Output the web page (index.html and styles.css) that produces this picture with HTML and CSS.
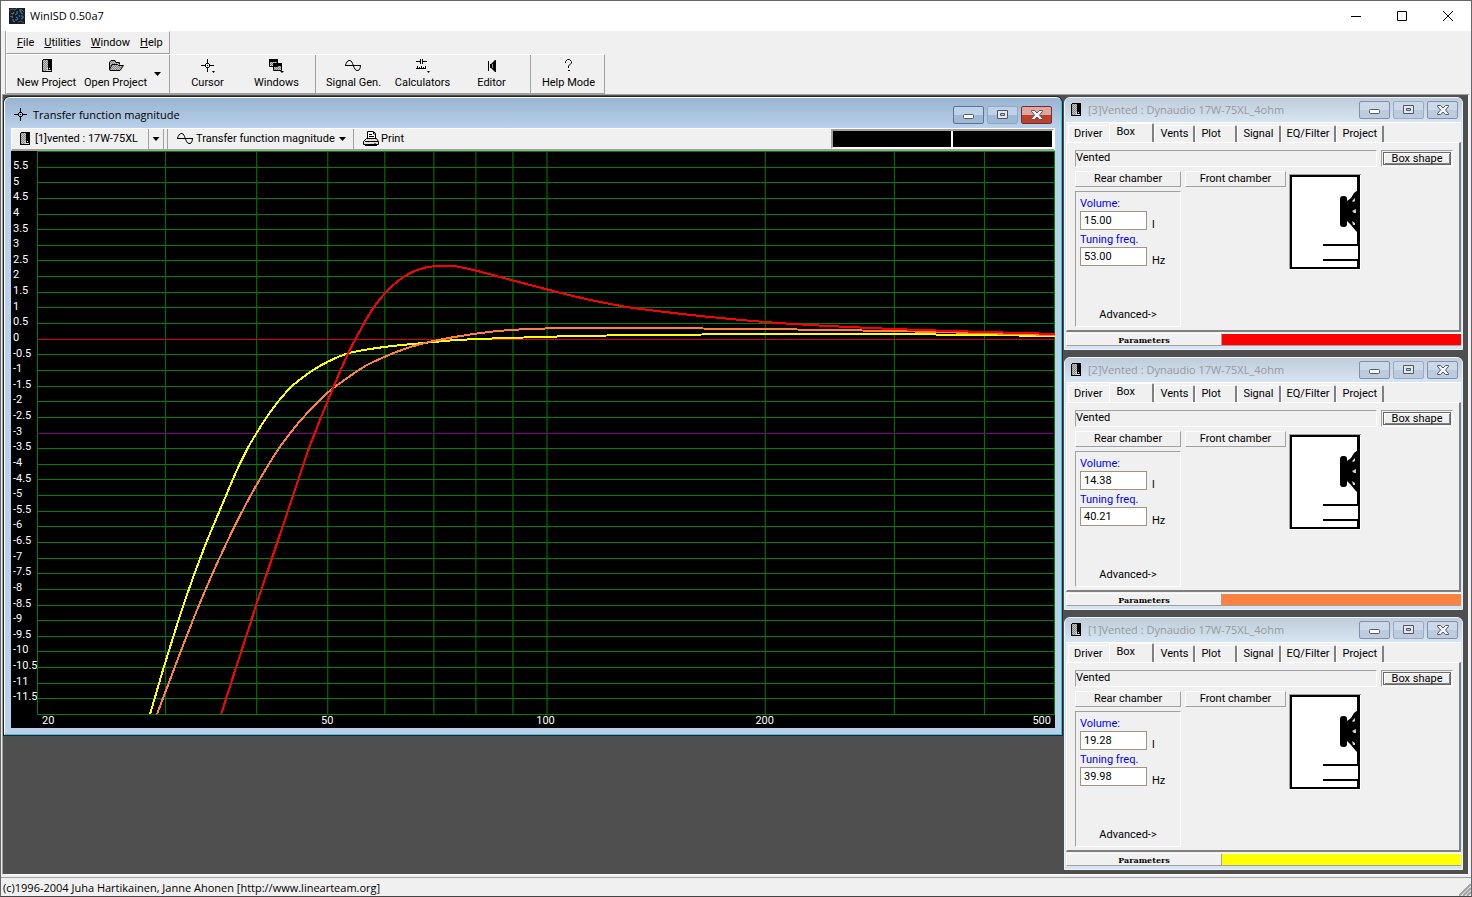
FILE: index.html
```html
<!DOCTYPE html>
<html lang="en">
<head>
<meta charset="utf-8">
<title>WinISD 0.50a7</title>
<link rel="stylesheet" href="styles.css">
</head>
<body>
<svg class="defs" aria-hidden="true">
  <defs>
    <pattern id="dither" width="2" height="2" patternUnits="userSpaceOnUse"><rect width="2" height="2" fill="#c4c4c4"/><path d="M0 0h1v1h-1zM1 1h1v1h-1z" fill="#858585"/></pattern>
    <symbol id="i-box" viewBox="0 0 10 14"><path d="M1 0h9v13H0V1h1z" fill="#000"/><path d="M1 1h5v11H1z" fill="url(#dither)"/><path d="M5 9h1v1H5zM7 9h1v1H7zM5 11h4v1H5z" fill="#ddd"/></symbol>
    <symbol id="i-min" viewBox="0 0 12 10"><rect x=".5" y="4.500" width="10" height="4" rx="1" fill="#fff" stroke="#50566b"/></symbol>
    <symbol id="i-max" viewBox="0 0 12 10"><path d="M.5.5h10v8H.5z" fill="#e6e6e6" stroke="#50566b"/><path d="M3.500 3.500h4v2h-4z" fill="#b8c9dc" stroke="#50566b"/></symbol>
    <symbol id="i-close" viewBox="0 0 12 10"><path d="M.5.5h3l2.500 2.500L8.500.5h3v1L8.500 5l3 3.500v1h-3L6 7 3.500 9.500h-3v-1L3.500 5l-3-3.500z" fill="#f4f4f4" stroke="#50566b"/></symbol>
    <symbol id="i-cross" viewBox="0 0 14 14"><path d="M6 0h1v4H6zM6 9h1v4H6zM0 6h4v1H0zM9 6h4v1H9zM5 4h3v1H5zM5 8h3v1H5zM4 5h1v3H4zM8 5h1v3H8zM6 6h1v1H6z" fill="#000"/></symbol>
    <symbol id="i-wave" viewBox="0 0 17 12"><path d="M0 5.500h16M.5 5.500C1 3 2.500.500 4 .500h1c3 0 3.500 10 7 10h1c1.500 0 2.500-3 2.500-5" fill="none" stroke="#000"/></symbol>
    <symbol id="i-cabinet" viewBox="0 0 72 96"><path d="M0 0h72v96H0z" fill="#fff"/><path d="M0 0h72v1H1v94H0z" fill="#a0a0a0"/><path d="M1 1h70v94H1zM3 3v90h65V3z" fill="#000" fill-rule="evenodd"/><path d="M69 16l-4 3-3 5-4 3v-2q0-3-3-3h-1q-3 0-3 3v25q0 3 3 3h1q3 0 3-3v-3l4 4 4 5 3 3z" fill="#000"/><path d="M63 27l3-3v3l-2 1zM63 37l4-2v4h-2zM63 47l3 2v2h-2z" fill="#d0d0d0"/><path d="M34 70h36v2H34zM34 85h36v2H34z" fill="#000"/><path d="M68 72h1v13h-1z" fill="#fff"/></symbol>
  </defs>
</svg>
<div class="app">
  <header class="caption">
    <svg class="logo" width="16" height="16" viewBox="0 0 16 16"><path d="M0 0h16v16H0z" fill="#181b20"/><path d="M0 3l3-2 3 1 2-2M9 14l3-1 3 2M12 1l3 3M1 8l3 2" stroke="#55585c" fill="none"/><path d="M2 5l2 1 1-2M2 9l2-1M3 12h2M6 7l3-2M7 4h2M10 2h2l-1 2h2M12 5l2 1M12 8h2v2l-2 1M7 9l2 1-1 2H6M4 13l2 1M10 7l1 2" stroke="#3585c6" fill="none"/></svg>
    <h1 class="caption-title">WinISD 0.50a7</h1>
    <div class="sysbuttons">
      <button class="sysbtn" aria-label="Minimize"><svg width="10" height="10"><path d="M0 5h10v1H0z"/></svg></button>
      <button class="sysbtn" aria-label="Maximize"><svg width="10" height="10"><path d="M.5.5h9v9h-9z" fill="none" stroke="#000"/></svg></button>
      <button class="sysbtn" aria-label="Close"><svg width="10" height="10"><path d="M0 0l10 10M10 0L0 10" stroke="#000"/></svg></button>
    </div>
  </header>
  <nav class="menubar">
    <button class="menu"><u>F</u>ile</button><button class="menu"><u>U</u>tilities</button><button class="menu"><u>W</u>indow</button><button class="menu"><u>H</u>elp</button>
  </nav>
  <div class="toolbar">
    <button class="tool"><svg width="10" height="14"><use href="#i-box"/></svg>New Project</button>
    <button class="tool"><svg width="16" height="14"><path d="M1.500 11V3.500L3 1.500h4l1 2h3.500v2M1.500 10.500L4 5.500h5.500l1 1h5L12 11.500H2z" fill="url(#dither)" stroke="#000"/></svg>Open Project</button>
    <button class="drop" aria-label="Open recent"><i class="arrow"></i></button>
    <button class="tool sep"><svg width="14" height="14"><use href="#i-cross"/><path d="M11 12h3l-1.500 2z"/></svg>Cursor</button>
    <button class="tool"><svg width="15" height="14"><path d="M.5.5h8v7h-8zM4.500 4.500h8v7h-8z" fill="url(#dither)" stroke="#000"/><path d="M0 0h9v3H0zM4 4h9v3H4zM11 12h4l-2 2z"/></svg>Windows</button>
    <button class="tool sep"><svg width="17" height="14"><use href="#i-wave" y="1" width="17" height="12"/></svg>Signal Gen.</button>
    <button class="tool"><svg width="14" height="14"><path d="M0 2.500h4M7 2.500h4M4.500 0v5M6.500 0v5M0 9.500h10M1.500 7v2M3.500 8v2M5.500 7v2M7.500 8v2M9.500 7v2" stroke="#000"/><path d="M11 12h3l-1.500 2z"/></svg>Calculators</button>
    <button class="tool"><svg width="12" height="14"><path d="M2 2h1v10H2zM9 1h1v12H9zM4 5h1v4H4zM5 5l4-4v12L5 9z"/><path d="M6.500 5v4" stroke="#999"/></svg>Editor</button>
    <button class="tool sep"><svg width="10" height="14"><path d="M1.500 4V2.500l2-2h2l2 2V4l-3 3v2M4 11.500h2" fill="none" stroke="#000"/></svg>Help Mode</button>
  </div>

  <main class="workspace">
    <section class="win active">
      <header class="title">
        <svg width="14" height="14"><use href="#i-cross"/></svg>
        <h2>Transfer function magnitude</h2>
        <button class="wbtn" aria-label="Minimize"><svg width="12" height="10"><use href="#i-min"/></svg></button>
        <button class="wbtn dim" aria-label="Maximize"><svg width="12" height="10"><use href="#i-max"/></svg></button>
        <button class="wbtn red" aria-label="Close"><svg width="12" height="10"><use href="#i-close"/></svg></button>
      </header>
      <div class="plotbar">
        <button class="flat project"><svg width="10" height="14"><use href="#i-box"/></svg>[1]vented : 17W-75XL</button>
        <button class="flat pick" aria-label="Choose project"><i class="arrow"></i></button>
        <button class="flat quantity"><svg width="17" height="12"><use href="#i-wave"/></svg>Transfer function magnitude<i class="arrow"></i></button>
        <button class="flat print"><svg width="17" height="16"><path d="M4.500 8V.5h6l2 2V8" fill="#fff" stroke="#000"/><path d="M6 3.500h3M6 5.500h5M10.500 1v2h2" stroke="#000" fill="none"/><path d="M.5 10.500l3-3h10l2 3v3H.5z" fill="#ddd" stroke="#000"/><path d="M2 10.500h13M2 14.500h12" stroke="#000"/><path d="M11 12h2v1h-2z" fill="#d33"/></svg>Print</button>
        <div class="readout"><output></output><output></output></div>
      </div>
      <div class="chart">
        <div class="yaxis" id="yaxis"></div>
        <svg class="plot" id="plot" viewBox="0 0 1017 563" preserveAspectRatio="none" role="img" aria-label="Transfer function magnitude"></svg>
        <div class="xaxis"><span>20</span><span>50</span><span>100</span><span>200</span><span>500</span></div>
      </div>
    </section>

    <div class="projects">
      <section class="win">
        <header class="title">
          <svg width="10" height="14"><use href="#i-box"/></svg><h2>[3]Vented : Dynaudio 17W-75XL_4ohm</h2>
          <button class="wbtn" aria-label="Minimize"><svg width="12" height="10"><use href="#i-min"/></svg></button>
          <button class="wbtn dim" aria-label="Maximize"><svg width="12" height="10"><use href="#i-max"/></svg></button>
          <button class="wbtn" aria-label="Close"><svg width="12" height="10"><use href="#i-close"/></svg></button>
        </header>
        <div class="client">
          <div class="tabs" role="tablist"><button role="tab" class="tab">Driver</button><button role="tab" class="tab on" aria-selected="true">Box</button><button role="tab" class="tab">Vents</button><button role="tab" class="tab wide">Plot</button><button role="tab" class="tab">Signal</button><button role="tab" class="tab">EQ/Filter</button><button role="tab" class="tab">Project</button></div>
          <div class="page">
            <div class="kind"><span class="kind-name">Vented</span><span class="frame"><button class="shape">Box shape</button></span></div>
            <div class="box">
              <div class="rear">
                <button class="chamber">Rear chamber</button>
                <div class="group">
                  <label for="v3">Volume:</label><div class="field"><input id="v3" value="15.00"><span>l</span></div>
                  <label for="f3">Tuning freq.</label><div class="field"><input id="f3" value="53.00"><span>Hz</span></div>
                  <button class="advanced">Advanced-&gt;</button>
                </div>
              </div>
              <button class="chamber front">Front chamber</button>
              <svg class="cabinet" width="72" height="96"><use href="#i-cabinet"/></svg>
            </div>
          </div>
          <footer class="foot"><button class="params">Parameters</button><span class="swatch red"></span></footer>
        </div>
      </section>
      <section class="win">
        <header class="title">
          <svg width="10" height="14"><use href="#i-box"/></svg><h2>[2]Vented : Dynaudio 17W-75XL_4ohm</h2>
          <button class="wbtn" aria-label="Minimize"><svg width="12" height="10"><use href="#i-min"/></svg></button>
          <button class="wbtn dim" aria-label="Maximize"><svg width="12" height="10"><use href="#i-max"/></svg></button>
          <button class="wbtn" aria-label="Close"><svg width="12" height="10"><use href="#i-close"/></svg></button>
        </header>
        <div class="client">
          <div class="tabs" role="tablist"><button role="tab" class="tab">Driver</button><button role="tab" class="tab on" aria-selected="true">Box</button><button role="tab" class="tab">Vents</button><button role="tab" class="tab wide">Plot</button><button role="tab" class="tab">Signal</button><button role="tab" class="tab">EQ/Filter</button><button role="tab" class="tab">Project</button></div>
          <div class="page">
            <div class="kind"><span class="kind-name">Vented</span><span class="frame"><button class="shape">Box shape</button></span></div>
            <div class="box">
              <div class="rear">
                <button class="chamber">Rear chamber</button>
                <div class="group">
                  <label for="v2">Volume:</label><div class="field"><input id="v2" value="14.38"><span>l</span></div>
                  <label for="f2">Tuning freq.</label><div class="field"><input id="f2" value="40.21"><span>Hz</span></div>
                  <button class="advanced">Advanced-&gt;</button>
                </div>
              </div>
              <button class="chamber front">Front chamber</button>
              <svg class="cabinet" width="72" height="96"><use href="#i-cabinet"/></svg>
            </div>
          </div>
          <footer class="foot"><button class="params">Parameters</button><span class="swatch orange"></span></footer>
        </div>
      </section>
      <section class="win">
        <header class="title">
          <svg width="10" height="14"><use href="#i-box"/></svg><h2>[1]Vented : Dynaudio 17W-75XL_4ohm</h2>
          <button class="wbtn" aria-label="Minimize"><svg width="12" height="10"><use href="#i-min"/></svg></button>
          <button class="wbtn dim" aria-label="Maximize"><svg width="12" height="10"><use href="#i-max"/></svg></button>
          <button class="wbtn" aria-label="Close"><svg width="12" height="10"><use href="#i-close"/></svg></button>
        </header>
        <div class="client">
          <div class="tabs" role="tablist"><button role="tab" class="tab">Driver</button><button role="tab" class="tab on" aria-selected="true">Box</button><button role="tab" class="tab">Vents</button><button role="tab" class="tab wide">Plot</button><button role="tab" class="tab">Signal</button><button role="tab" class="tab">EQ/Filter</button><button role="tab" class="tab">Project</button></div>
          <div class="page">
            <div class="kind"><span class="kind-name">Vented</span><span class="frame"><button class="shape">Box shape</button></span></div>
            <div class="box">
              <div class="rear">
                <button class="chamber">Rear chamber</button>
                <div class="group">
                  <label for="v1">Volume:</label><div class="field"><input id="v1" value="19.28"><span>l</span></div>
                  <label for="f1">Tuning freq.</label><div class="field"><input id="f1" value="39.98"><span>Hz</span></div>
                  <button class="advanced">Advanced-&gt;</button>
                </div>
              </div>
              <button class="chamber front">Front chamber</button>
              <svg class="cabinet" width="72" height="96"><use href="#i-cabinet"/></svg>
            </div>
          </div>
          <footer class="foot"><button class="params">Parameters</button><span class="swatch yellow"></span></footer>
        </div>
      </section>
    </div>
  </main>
  <footer class="status"><span>(c)1996-2004 Juha Hartikainen, Janne Ahonen [http://www.linearteam.org]</span><svg width="12" height="12"><path d="M0 12L12 0M4 12l8-8M8 12l4-4" stroke="#a0a0a0" stroke-width="2"/></svg></footer>
</div>
<script src="plot.js"></script>
</body>
</html>
```
FILE: styles.css
```css
* { box-sizing: border-box; }
body { margin: 0; font: 11px/14px Roboto, "Liberation Sans", Arial, sans-serif; color: #000; background: #f0f0f0; }
button { font: inherit; color: inherit; background: none; border: 0; padding: 0; margin: 0; border-radius: 0; white-space: nowrap; }
h1, h2 { margin: 0; font-weight: 400; }
svg { display: block; flex: none; }
.defs { position: absolute; width: 0; height: 0; }

.app { min-height: 100vh; display: flex; flex-direction: column; border: 1px solid #67646c; border-bottom-color: #444; background: #f0f0f0; }

.caption { display: flex; align-items: center; height: 30px; padding-left: 8px; background: #fff; }
.caption-title { flex: 1; padding-left: 5px; font: 11px/16px "Open Sans", sans-serif; }
.sysbuttons { display: flex; }
.sysbtn { width: 46px; height: 29px; display: grid; place-items: center; }

.menubar, .toolbar { align-self: flex-start; display: flex; margin-left: 5px; border: 1px solid #fff; border-right-color: #a0a0a0; border-bottom-color: #a0a0a0; box-shadow: -1px 0 #a0a0a0; }
.menubar { height: 23px; padding: 0 1px 0 5px; }
.menu { padding: 0 5px; }
.toolbar { height: 40px; padding: 0 1px 0 5px; align-items: stretch; }
.tool { width: 69px; padding-top: 4px; display: flex; flex-direction: column; align-items: center; gap: 3px; }
.drop { width: 15px; display: grid; place-items: center; }
.sep { width: 73px; margin-left: 4px; padding-left: 3px; border-left: 1px solid #a0a0a0; }
.arrow { width: 7px; height: 4px; background: #000; clip-path: polygon(0 0, 100% 0, 50% 100%); }

.workspace { flex: 1; display: grid; grid-template-columns: minmax(0, 1fr) 399px; gap: 2px; align-items: start; margin: 0 1px 0 1px; padding: 2px 5px 4px 1px; background: #4f4f4f; border: 1px solid #a0a0a0; border-right: 2px solid #f4f4f4; border-bottom-color: #fff; }

.win { background: #d7e4f2; border: 1px solid #eef3f8; border-radius: 6px 6px 0 0; padding: 0 1px 3px; }
.title { display: flex; align-items: center; height: 24px; gap: 3px; padding: 0 4px 0 6px; margin: 0 -1px; border-radius: 5px 5px 0 0; background: linear-gradient(#bfcddb, #d7e4f2); }
.title h2 { flex: 1; padding-left: 4px; font: 11px/16px "Open Sans", sans-serif; color: #999; white-space: nowrap; }
.wbtn { width: 31px; height: 18px; display: grid; place-items: center; border: 1px solid #8290ae; border-radius: 2px; background: linear-gradient(#cbd8e7 50%, #bccbdd 50%); }
.wbtn.dim { border-color: #9baac5; }

.active { background: #b9d1ea; border-color: #fff #34c5e0 #34c5e0 #fff; box-shadow: 0 0 0 1px #222; padding: 0 6px 6px; }
.active .title { height: 30px; margin: 0 -6px; padding: 4px 9px 0 9px; background: linear-gradient(#99b4d1, #b9d1ea); }
.active .title h2 { color: #000; padding-left: 2px; }
.active .wbtn { border-color: #5b7390; background: linear-gradient(#bdd2e8 50%, #9fb9d5 50%); }
.active .dim { border-color: #8ea9c6; }
.active .red { border-color: #6b2f3c; background: linear-gradient(#e0a59b 50%, #bd4029 50%); }

.plotbar { display: flex; height: 23px; background: #f0f0f0; border: 1px solid #fff; border-bottom: 2px solid #a0a0a0; }
.flat { display: flex; align-items: center; }
.project { padding-left: 8px; gap: 5px; width: 137px; border-right: 1px solid #a0a0a0; }
.pick { width: 15px; justify-content: center; border-right: 1px solid #a0a0a0; }
.quantity { margin-left: 3px; border-left: 1px solid #a0a0a0; padding-left: 9px; gap: 2px; width: 186px; }
.quantity .arrow { margin-left: auto; margin-right: 7px; }
.print { border-left: 1px solid #a0a0a0; padding-left: 9px; gap: 1px; }
.readout { margin-left: auto; display: grid; grid-template-columns: 118px 1fr; gap: 2px; width: 223px; border: 2px solid #a0a0a0; border-right-color: #fff; border-bottom-color: #fff; background: #fff; }
.readout output { background: #000; }

.chart { display: grid; grid-template-columns: 26px minmax(0, 1fr); grid-template-rows: 563px 14px; background: #000; color: #fff; }
.yaxis { display: flex; flex-direction: column; padding: 8px 0 8px 2px; white-space: nowrap; }
.yaxis span { flex: 1 1 0; min-height: 0; }
.plot { width: 100%; height: 100%; overflow: visible; shape-rendering: crispEdges; }
.plot path { fill: none; stroke: #008000; vector-effect: non-scaling-stroke; }
.plot .zero { stroke: #d00; }
.plot .minus3 { stroke: #800080; }
.plot .curve { stroke-width: 2px; }
.plot .c1 { stroke: #ff0; }
.plot .c2 { stroke: #ff8040; }
.plot .c3 { stroke: #f00; }
.xaxis { grid-column: 2; display: grid; grid-template-columns: 181fr 218fr 218fr 220fr 180fr; text-align: center; }
.xaxis span:first-child { text-align: left; padding-left: 5px; }
.xaxis span:last-child { text-align: right; padding-right: 4px; }

.projects { display: grid; gap: 7px; }
.client { background: #f0f0f0; border-top: 1px solid #fff; }
.tabs { display: flex; align-items: flex-end; height: 19px; padding-left: 2px; }
.tab { height: 17px; padding: 0 5px; flex: none; border: 1px solid #fff; border-width: 1px 2px 0 1px; border-right-color: #808080; border-radius: 2px 2px 0 0; }
.tab:first-child { border-right-color: #f0f0f0; }
.tab.on { height: 19px; width: 45px; padding: 0 20px 3px 6px; text-align: left; }
.tab.wide { width: 42px; text-align: left; }
.page { border: 1px solid #fff; border-right: 2px solid #808080; border-bottom: 2px solid #808080; padding: 7px 6px 3px 8px; display: flex; flex-direction: column; gap: 4px; }
.kind { display: flex; gap: 4px; height: 17px; }
.kind-name { flex: 1; border: 1px solid #a0a0a0; border-right-color: #fff; border-bottom-color: #fff; }
.frame { width: 72px; border: 1px solid #a0a0a0; border-right-color: #fff; border-bottom-color: #fff; display: flex; }
.shape { flex: 1; line-height: 10px; border: 1px solid #696969; box-shadow: inset 1px 1px #fff, inset -1px -1px #808080; margin: 1px; }
.box { display: flex; align-items: flex-start; }
.rear { width: 106px; display: grid; gap: 4px; }
.chamber { height: 16px; border: 1px solid #fff; border-right-color: #a0a0a0; border-bottom-color: #a0a0a0; }
.front { width: 101px; margin: 0 3px 0 4px; }
.cabinet { margin-top: 3px; }
.group { display: flex; flex-direction: column; height: 136px; padding: 4px 4px; border: 1px solid #a0a0a0; border-right-color: #fff; border-bottom-color: #fff; }
.group label { color: #00f; line-height: 15px; }
.field { display: flex; gap: 5px; height: 21px; }
.field input { width: 67px; height: 19px; padding: 0 3px; font: inherit; color: #000; background: #fff; border: 1px solid #a09484; border-radius: 0; }
.field span { padding-top: 7px; line-height: 14px; }
.advanced { margin-top: auto; }
.foot { display: grid; grid-template-columns: 156px 1fr; height: 13px; margin-top: 1px; }
.params { border: 1px solid #fff; border-right-color: #a0a0a0; border-bottom-color: #a0a0a0; font: bold 8px/10px "DejaVu Serif", serif; }
.swatch { border-top: 1px solid #fff; border-bottom: 1px solid #a0a0a0; }
.swatch.red { background: #f00; }
.swatch.orange { background: #ff8040; }
.swatch.yellow { background: #ff0; }

.status { display: flex; align-items: flex-end; justify-content: space-between; height: 19px; margin-top: 2px; padding-left: 2px; border-top: 1px solid #a0a0a0; font: 11px/17px "Open Sans", sans-serif; }
```
FILE: plot.js
```js
const NS = "http://www.w3.org/2000/svg";
const plot = document.getElementById("plot");
const W = 1017, H = 563;
const fx = f => Math.round(Math.log(f / 20) / Math.log(25) * W) + 0.5;
const dy = d => Math.round((6 - d) / 18 * H) + 0.5;

function add(d, cls) {
  const p = document.createElementNS(NS, "path");
  p.setAttribute("d", d);
  if (cls) p.setAttribute("class", cls);
  plot.append(p);
}

for (const f of [20, 30, 40, 50, 60, 70, 80, 90, 100, 200, 300, 400]) add(`M${fx(f)} 0V${H}`);
add(`M${W - 0.5} 0V${H}`);
for (let d = 6; d >= -12; d -= 0.5) {
  add(`M0 ${dy(d)}H${W}`, d === 0 ? "zero" : d === -3 ? "minus3" : "");
}

// Smooth curve through sampled points (Catmull-Rom as cubic segments).
function curve(p, cls) {
  let d = `M${p[0]}`;
  for (let i = 0; i < p.length - 1; i++) {
    const a = p[i - 1] || p[i], b = p[i], c = p[i + 1], e = p[i + 2] || c;
    const w = c[0] - b[0];
    const mb = (c[1] - a[1]) / (c[0] - a[0]), mc = (e[1] - b[1]) / (e[0] - b[0]);
    d += `C${b[0] + w / 3} ${b[1] + mb * w / 3} ${c[0] - w / 3} ${c[1] - mc * w / 3} ${c}`;
  }
  add(d, "curve " + cls);
}
curve([[113,563],[128,512],[148,449],[167,397],[187,349],[198,323],[209,300],[220,281],[231,264],[243,248],[256,234],[276,219],[290,211],[303,205],[316,201],[347,196],[386,192],[420,189],[470,187],[536,185],[603,184],[727,183],[856,183],[1017,185]], "c1");
curve([[120,563],[143,502],[164,449],[187,397],[211,349],[236,306],[253,282],[270,262],[290,242],[310,227],[328,215],[347,206],[370,197],[396,190],[436,183],[473,179],[531,177],[603,177],[727,178],[856,180],[1017,184]], "c2");
curve([[184,563],[219,454],[255,347],[270,302],[290,251],[310,204],[322,181],[334,160],[347,143],[366,126],[386,117],[403,115],[416,115],[436,119],[470,128],[508,138],[553,149],[603,158],[727,171],[856,178],[1017,183]], "c3");

const yaxis = document.getElementById("yaxis");
for (let d = 5.5; d >= -11.5; d -= 0.5) {
  const s = document.createElement("span");
  s.textContent = d;
  yaxis.append(s);
}
```
